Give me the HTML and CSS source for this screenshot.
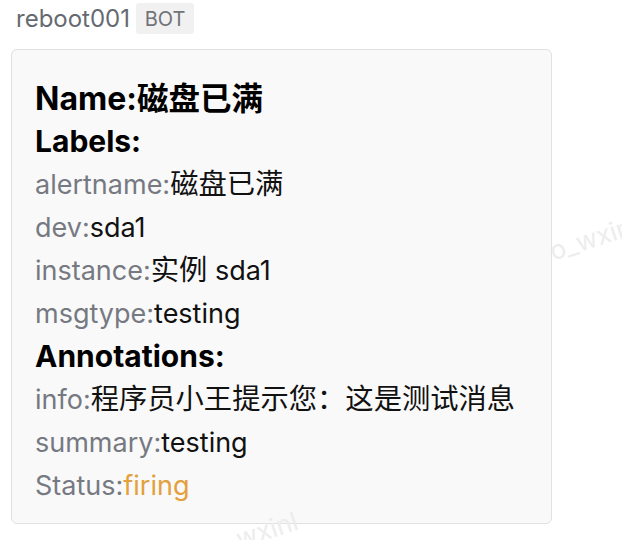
FILE: index.html
```html
<!DOCTYPE html>
<html lang="zh-CN">
<head>
<meta charset="utf-8">
<link rel="stylesheet" href="styles.css">
</head>
<body>
<div class="page">
  <div class="header">
    <span class="sender">reboot001</span>
    <span class="badge">BOT</span>
  </div>
  <div class="card">
    <div class="line title">Name:<span class="zh">磁盘已满</span></div>
    <div class="line section">Labels:</div>
    <div class="line"><span class="key">alertname:</span><span class="val zh">磁盘已满</span></div>
    <div class="line"><span class="key">dev:</span><span class="val">sda1</span></div>
    <div class="line"><span class="key">instance:</span><span class="val"><span class="zh">实例</span> sda1</span></div>
    <div class="line"><span class="key">msgtype:</span><span class="val">testing</span></div>
    <div class="line section">Annotations:</div>
    <div class="line"><span class="key">info:</span><span class="val zh">程序员小王提示您：这是测试消息</span></div>
    <div class="line"><span class="key">summary:</span><span class="val">testing</span></div>
    <div class="line"><span class="key">Status:</span><span class="firing">firing</span></div>
  </div>
  <span class="wm wm1">o_wxinl</span>
  <span class="wm wm2">wxinl</span>
</div>
</body>
</html>
```
FILE: styles.css
```css
* { box-sizing: border-box; }
html, body {
  margin: 0;
  padding: 0;
  background: #ffffff;
}
body {
  font-family: Inter, "Noto Sans CJK SC", sans-serif;
  color: #000;
}
.page {
  position: relative;
  width: 622px;
  height: 540px;
  padding: 3px 0 0 11px;
  overflow: hidden;
}
.header {
  display: flex;
  align-items: center;
  gap: 6px;
  padding-left: 5px;
  height: 31px;
}
.sender {
  font-size: 24px;
  color: #666a70;
}
.badge {
  display: inline-flex;
  align-items: center;
  justify-content: center;
  height: 31px;
  width: 58px;
  background: #f1f1f1;
  border-radius: 3px;
  font-size: 20px;
  color: #707378;
}
.card {
  margin-top: 15px;
  width: 541px;
  height: 475px;
  background: #f9f9f9;
  border: 1.5px solid #e1e1e1;
  border-radius: 6px;
  padding: 27px 20px 0 23px;
  font-size: 27px;
}
.line {
  height: 43px;
  line-height: 43px;
  white-space: nowrap;
}
.zh {
  font-size: 28.3px;
}
.title, .section {
  font-weight: 700;
  font-size: 30px;
}
.title {
  font-size: 32px;
}
.title .zh {
  font-size: 31.5px;
}
.key {
  color: #767982;
}
.val {
  color: #111;
}
.firing {
  color: #e3a03b;
}
.wm {
  position: absolute;
  font-size: 26px;
  color: #ededed;
  font-family: Inter, sans-serif;
  transform: rotate(-18deg);
  pointer-events: none;
}
.wm1 { left: 548px; top: 222px; }
.wm2 { left: 235px; top: 514px; }
```
